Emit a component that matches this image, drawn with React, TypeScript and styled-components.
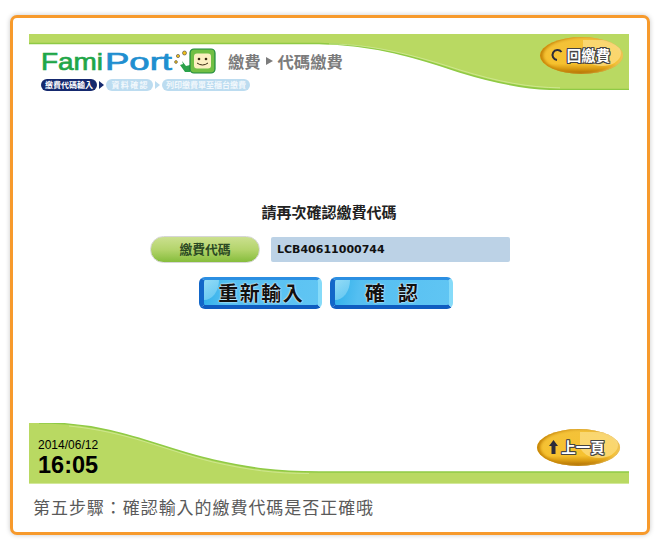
import React from "react";
import styled, { createGlobalStyle } from "styled-components";

const CJK = `"Noto Sans CJK TC", "Noto Sans CJK SC", sans-serif`;

const GlobalStyle = createGlobalStyle`
  html, body {
    margin: 0;
    padding: 0;
    background: #ffffff;
  }
`;

const Page = styled.div`
  width: 660px;
  height: 550px;
  padding: 15px 10px;
  box-sizing: border-box;
  overflow: hidden;
`;

const Card = styled.div`
  width: 640px;
  height: 520px;
  box-sizing: border-box;
  padding: 16px 16px 0;
  background: #ffffff;
  border: 3px solid #f79a2c;
  border-radius: 7px;
  box-shadow: 0 0 5px rgba(0, 0, 0, 0.22);
`;

const Screen = styled.div`
  width: 600px;
  height: 450px;
  display: flex;
  flex-direction: column;
`;

const Wave = styled.svg`
  position: absolute;
  left: 0;
  top: 0;
  display: block;
`;

const Header = styled.header`
  position: relative;
  height: 58px;
  display: flex;
  justify-content: space-between;
  align-items: flex-start;
`;

const HeaderLeft = styled.div`
  position: relative;
  padding: 13px 0 0 12px;
  display: flex;
  flex-direction: column;
  gap: 4px;
`;

const LogoRow = styled.div`
  display: flex;
  align-items: center;
  gap: 11px;
  height: 28px;
`;

const Crumb = styled.div`
  display: flex;
  align-items: center;
  gap: 5px;
  font: 700 16.3px/1 ${CJK};
  color: #7c7c7c;
`;

const CrumbArrow = styled.span`
  width: 0;
  height: 0;
  border-left: 7px solid #7c7c7c;
  border-top: 4px solid transparent;
  border-bottom: 4px solid transparent;
`;

const Steps = styled.div`
  display: flex;
  align-items: center;
`;

const Step = styled.span<{ $active?: boolean; $w: number; $spread?: boolean }>`
  width: ${(p) => p.$w}px;
  height: 12px;
  box-sizing: border-box;
  display: flex;
  align-items: center;
  justify-content: ${(p) => (p.$spread ? "space-evenly" : "center")};
  padding: 0 4px;
  border-radius: 6px;
  font: 700 8px/1 ${CJK};
  white-space: nowrap;
  color: ${(p) => (p.$active ? "#ffffff" : "#f2f8fc")};
  background: ${(p) => (p.$active ? "#15296e" : "#bcdcf0")};
`;

const StepArrow = styled.span<{ $active?: boolean }>`
  width: 0;
  height: 0;
  margin: 0 2px;
  border-left: 5px solid ${(p) => (p.$active ? "#15296e" : "#bcdcf0")};
  border-top: 4px solid transparent;
  border-bottom: 4px solid transparent;
`;

const OvalButton = styled.button<{ $mt: number; $mr: number }>`
  position: relative;
  flex: none;
  width: 83px;
  height: 37px;
  margin: ${(p) => p.$mt}px ${(p) => p.$mr}px 0 0;
  padding: 0 3px 1px 0;
  display: flex;
  align-items: center;
  justify-content: center;
  gap: 3px;
  overflow: hidden;
  border: none;
  border-radius: 50%;
  background: linear-gradient(180deg, #f3c23a 0%, #f6c12f 72%, #d99a12 86%, #a86a05 100%);
  box-shadow: inset 3px 0 3px #c68508, inset -2px 0 2px #ecc25c;
  &::after {
    content: "";
    position: absolute;
    right: 2px;
    top: 3px;
    width: 38px;
    height: 26px;
    border-radius: 0 50% 50% 50%;
    background: rgba(255, 236, 170, 0.5);
  }
`;

const OvalLabel = styled.span`
  position: relative;
  z-index: 1;
  font: 700 14.5px/1 ${CJK};
  color: #ffffff;
  text-shadow: 1px 0 0 #444, -1px 0 0 #444, 0 1px 0 #444, 0 -1px 0 #444, 1px 1px 0 #444,
    -1px -1px 0 #444, 1px -1px 0 #444, -1px 1px 0 #444;
`;

const OvalIcon = styled.svg`
  position: relative;
  z-index: 1;
  display: block;
  flex: none;
`;

const Main = styled.main`
  flex: 1;
  padding-top: 110px;
  display: flex;
  flex-direction: column;
  align-items: center;
`;

const Heading = styled.h2`
  margin: 0 0 14px;
  font: 700 15px/20px ${CJK};
  color: #222222;
`;

const CodeRow = styled.div`
  display: flex;
  align-items: center;
  gap: 11px;
  margin-bottom: 14px;
  padding-left: 2px;
`;

const CodeLabel = styled.div`
  width: 110px;
  height: 27px;
  display: flex;
  align-items: center;
  justify-content: center;
  border: 1px solid #d6d6d6;
  box-sizing: border-box;
  border-radius: 14px;
  background: linear-gradient(180deg, #cbe08f 0%, #b4d46c 50%, #86bd3c 100%);
  font: 700 12.8px/1 ${CJK};
  color: #2b4a24;
`;

const CodeValue = styled.div`
  width: 239px;
  height: 25px;
  box-sizing: border-box;
  padding-left: 6px;
  display: flex;
  align-items: center;
  background: #bcd2e6;
  border-radius: 2px;
  font: 700 11px/1 "DejaVu Sans", sans-serif;
  color: #111111;
`;

const Actions = styled.div`
  display: flex;
  gap: 8px;
  margin-right: 7px;
`;

const BlueButton = styled.button<{ $spacing: number }>`
  position: relative;
  width: 123px;
  height: 32px;
  box-sizing: border-box;
  padding: 0 0 0 ${(p) => p.$spacing}px;
  display: flex;
  align-items: center;
  justify-content: center;
  overflow: hidden;
  border-style: solid;
  border-width: 3px 4px 4px 5px;
  border-color: #2b8fe2 #86dbf9 #0f5cc0 #1267c9;
  border-radius: 6px;
  background: linear-gradient(100deg, #2fb0ea 0%, #55bff1 22%, #60c5f3 100%);
  font: 700 20px/1 ${CJK};
  letter-spacing: ${(p) => p.$spacing}px;
  color: #111111;
  text-shadow: 0 0 2px #ffffff, 0 0 1px #ffffff;
  &::before {
    content: "";
    position: absolute;
    left: 0;
    top: 0;
    width: 15px;
    height: 20px;
    border-radius: 0 0 100% 0;
    background: linear-gradient(135deg, rgba(175, 232, 250, 0.8), rgba(175, 232, 250, 0.25));
  }
`;

const ButtonLabel = styled.span`
  position: relative;
  z-index: 1;
`;

const Footer = styled.footer`
  position: relative;
  height: 61px;
  display: flex;
  justify-content: space-between;
  align-items: flex-start;
`;

const Clock = styled.div`
  position: relative;
  padding: 15px 0 0 9px;
  font-family: "Liberation Sans", Arial, sans-serif;
  color: #000000;
`;

const DateText = styled.div`
  font-size: 12px;
  line-height: 14px;
`;

const TimeText = styled.div`
  margin-top: 1px;
  font-size: 23.500px;
  line-height: 24px;
  font-weight: 700;
`;

const Caption = styled.p`
  margin: 11px 0 0 4px;
  font: 400 17px/24px ${CJK};
  letter-spacing: 0.95px;
  color: #5a5a5a;
  white-space: nowrap;
`;

const Logo = () => (
  <svg width="176" height="28" viewBox="0 0 176 28">
    <text
      x="0"
      y="23"
      fontFamily="'Liberation Sans', sans-serif"
      fontSize="24"
      fill="#1fa648"
      stroke="#1fa648"
      strokeWidth="0.7"
      textLength="62"
      lengthAdjust="spacingAndGlyphs"
    >
      Fami
    </text>
    <text
      x="64"
      y="23"
      fontFamily="'Liberation Sans', sans-serif"
      fontSize="24"
      fill="#1f8fd0"
      stroke="#1f8fd0"
      strokeWidth="0.7"
      textLength="67"
      lengthAdjust="spacingAndGlyphs"
    >
      Port
    </text>
    <circle cx="137" cy="9" r="1.6" fill="#f2c21a" stroke="#444" strokeWidth="0.6" />
    <circle cx="143.5" cy="6" r="2" fill="#f2c21a" stroke="#444" strokeWidth="0.6" />
    <circle cx="135" cy="15" r="1.4" fill="#f2c21a" stroke="#444" strokeWidth="0.6" />
    <path d="M141 14l4 5 4-1v7h-5l-5-7 3-1z" fill="#2ba24a" />
    <rect x="149" y="2" width="25" height="24" rx="4" fill="#72bf44" stroke="#1c8a3c" strokeWidth="1.2" />
    <rect x="153" y="6.500" width="17" height="15" rx="3" fill="#fcefc0" />
    <circle cx="158" cy="12" r="1.3" fill="#3a2a10" />
    <circle cx="165" cy="12" r="1.3" fill="#3a2a10" />
    <path d="M156 16q5.500 4 11 0" fill="none" stroke="#3a2a10" strokeWidth="1" />
  </svg>
);

export default function App() {
  return (
    <>
      <GlobalStyle />
      <Page lang="zh-TW">
        <Card>
          <Screen>
            <Header>
              <Wave width="600" height="56" viewBox="0 0 600 56">
                <path d="M0 0H600V55.500H531C500 55.500 470 50 431 38C400 28 350 10 290 10H0Z" fill="#b9d962" />
                <path
                  d="M0 9.500H290C350 10 400 28 431 38C470 50 500 55.500 531 55.500H600"
                  fill="none"
                  stroke="#8fca45"
                  strokeWidth="1.500"
                />
                <path
                  d="M300 10C350 10 400 26 431 36C470 48 500 53.500 531 53.800"
                  fill="none"
                  stroke="#d6eca0"
                  strokeWidth="0.7"
                />
              </Wave>
              <HeaderLeft>
                <LogoRow>
                  <Logo />
                  <Crumb>
                    繳費
                    <CrumbArrow />
                    代碼繳費
                  </Crumb>
                </LogoRow>
                <Steps>
                  <Step $active $w={56}>
                    繳費代碼輸入
                  </Step>
                  <StepArrow $active />
                  <Step $w={47} $spread>
                    <span>資</span>
                    <span>料</span>
                    <span>確</span>
                    <span>認</span>
                  </Step>
                  <StepArrow />
                  <Step $w={88}>列印繳費單至櫃台繳費</Step>
                </Steps>
              </HeaderLeft>
              <OvalButton $mt={3} $mr={6}>
                <OvalIcon width="14" height="14" viewBox="0 0 14 14">
                  <path d="M11.500 4A5 5 0 1 0 7 12" fill="none" stroke="#2b2b3a" strokeWidth="2" />
                </OvalIcon>
                <OvalLabel>回繳費</OvalLabel>
              </OvalButton>
            </Header>
            <Main>
              <Heading>請再次確認繳費代碼</Heading>
              <CodeRow>
                <CodeLabel>繳費代碼</CodeLabel>
                <CodeValue>LCB40611000744</CodeValue>
              </CodeRow>
              <Actions>
                <BlueButton $spacing={1.5}>
                  <ButtonLabel>重新輸入</ButtonLabel>
                </BlueButton>
                <BlueButton $spacing={13}>
                  <ButtonLabel>確認</ButtonLabel>
                </BlueButton>
              </Actions>
            </Main>
            <Footer>
              <Wave width="600" height="61" viewBox="0 0 600 61">
                <path d="M0 0H21C90 2 130 25 184 37C220 45 245 49 290 49H600V60H0Z" fill="#b9d962" />
                <path
                  d="M10 0H21C90 2 130 25 184 37C220 45 245 49 290 49H600"
                  fill="none"
                  stroke="#8fca45"
                  strokeWidth="1.500"
                />
                <path d="M40 3C100 9 135 27 184 39C220 47 245 50.500 280 50.500" fill="none" stroke="#d6eca0" strokeWidth="0.7" />
                <path d="M0 60.500H600" stroke="#d2e89a" strokeWidth="1" />
              </Wave>
              <Clock>
                <DateText>2014/06/12</DateText>
                <TimeText>16:05</TimeText>
              </Clock>
              <OvalButton $mt={6} $mr={9}>
                <OvalIcon width="9" height="14" viewBox="0 0 9 14">
                  <path d="M4.500 0L9 6H6.500V14H2.500V6H0Z" fill="#2b2b3a" />
                </OvalIcon>
                <OvalLabel>上一頁</OvalLabel>
              </OvalButton>
            </Footer>
          </Screen>
          <Caption>第五步驟：確認輸入的繳費代碼是否正確哦</Caption>
        </Card>
      </Page>
    </>
  );
}
